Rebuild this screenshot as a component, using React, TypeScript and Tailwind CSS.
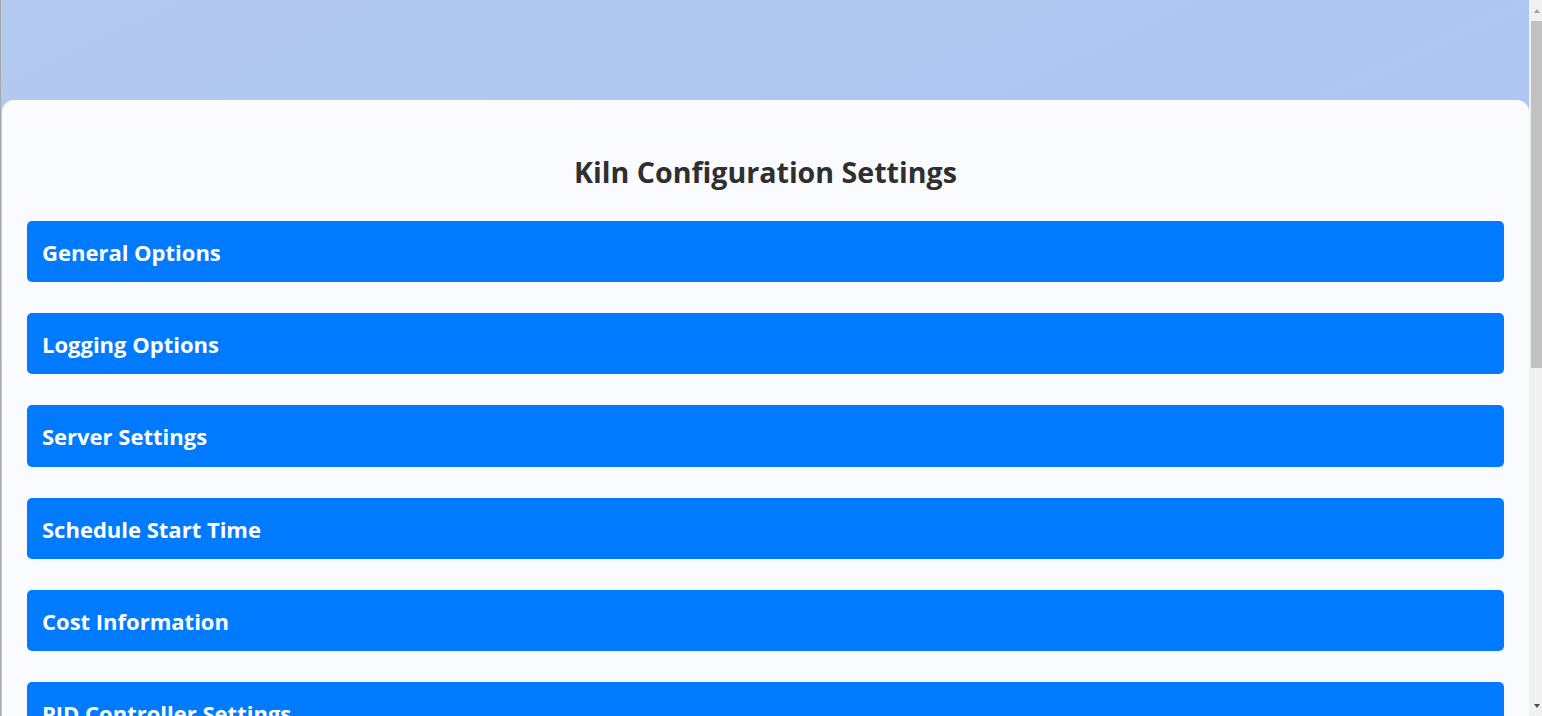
import React, { useState } from 'react';

const sections = [
  'General Options',
  'Logging Options',
  'Server Settings',
  'Schedule Start Time',
  'Cost Information',
  'PID Controller Settings',
  'Thermocouple Settings',
  'Safety Settings',
];

const App = () => {
  const [open, setOpen] = useState<string | null>(null);

  return (
    <div
      className="flex h-screen overflow-hidden"
      style={{ fontFamily: '"Open Sans", "Noto Sans", sans-serif' }}
    >
      {/* Page */}
      <div className="min-w-0 flex-1 overflow-hidden border-l border-[#a8a8a8] bg-gradient-to-br from-[#b3c9ef] to-[#aac5f2] pl-px pt-[100px]">
        <div className="rounded-t-xl bg-[#f9fbfe] px-[25px] pb-10 pt-[54px]">
          <h2 className="mb-[32px] text-center text-[28.6px] font-bold leading-[35px] text-[#2f2f2f]">
            Kiln Configuration Settings
          </h2>

          {/* Sections */}
          <div className="flex flex-col gap-[31px]">
            {sections.map((s) => (
              <div key={s}>
                <button
                  onClick={() => setOpen(open === s ? null : s)}
                  className="flex h-[61.2px] w-full items-center rounded-[5px] bg-[#007bff] px-[15px] pt-[2px] text-left text-[22px] font-bold text-white"
                >
                  {s}
                </button>
                {open === s && (
                  <div className="p-4 text-sm text-gray-600">No settings loaded.</div>
                )}
              </div>
            ))}
          </div>
        </div>
      </div>

      {/* Scrollbar */}
      <div className="flex w-[13px] shrink-0 flex-col bg-[#f1f1f1]">
        <div className="flex h-[21px] items-center justify-center pl-[3px]">
          <div className="h-0 w-0 border-x-[3.5px] border-b-[4px] border-x-transparent border-b-[#a3a3a3]" />
        </div>
        <div className="ml-[2px] h-[347px] bg-[#c1c1c1]" />
        <div className="flex-1" />
        <div className="flex h-[21px] items-center justify-center pl-[3px]">
          <div className="h-0 w-0 border-x-[3.5px] border-t-[4px] border-x-transparent border-t-[#505050]" />
        </div>
      </div>
    </div>
  );
};

export default App;
